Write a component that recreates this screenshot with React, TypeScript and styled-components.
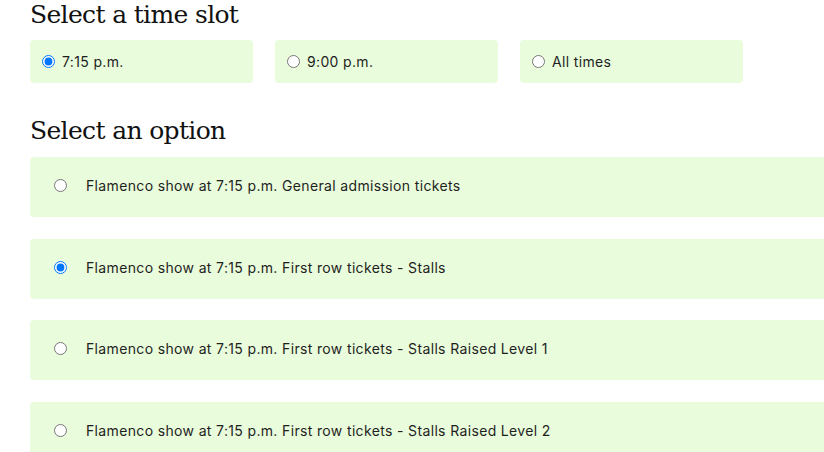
import { useState } from "react";
import styled, { createGlobalStyle } from "styled-components";

const GlobalStyle = createGlobalStyle`
  html, body {
    margin: 0;
    padding: 0;
    background: #ffffff;
    overflow: hidden;
  }
  body {
    font-family: Inter, "Noto Sans", sans-serif;
    color: #1f1f1f;
  }
`;

const timeSlots = ["7:15 p.m.", "9:00 p.m.", "All times"];

const options = [
  "Flamenco show at 7:15 p.m. General admission tickets",
  "Flamenco show at 7:15 p.m. First row tickets - Stalls",
  "Flamenco show at 7:15 p.m. First row tickets - Stalls Raised Level 1",
  "Flamenco show at 7:15 p.m. First row tickets - Stalls Raised Level 2",
];

const App = (): JSX.Element => {
  const [slot, setSlot] = useState(0);
  const [option, setOption] = useState(1);

  return (
    <Page>
      <GlobalStyle />
      <Heading>Select a time slot</Heading>
      <SlotRow>
        {timeSlots.map((label, i) => (
          <SlotCard key={label}>
            <Radio
              type="radio"
              name="slot"
              checked={slot === i}
              onChange={() => setSlot(i)}
            />
            <span>{label}</span>
          </SlotCard>
        ))}
      </SlotRow>

      <Heading $spaced>Select an option</Heading>
      <OptionList>
        {options.map((label, i) => (
          <OptionCard key={label}>
            <Radio
              type="radio"
              name="option"
              checked={option === i}
              onChange={() => setOption(i)}
            />
            <span>{label}</span>
          </OptionCard>
        ))}
      </OptionList>
    </Page>
  );
};
export default App;

const Page = styled.div`
  display: flex;
  flex-direction: column;
  padding-left: 30px;
  width: 794px;
`;

const Heading = styled.h2<{ $spaced?: boolean }>`
  margin: ${(p) => (p.$spaced ? "33px 0 11px" : "0 0 10px")};
  font-family: "DejaVu Serif", "Liberation Serif", serif;
  font-size: 25px;
  letter-spacing: -0.65px;
  line-height: 30px;
  font-weight: 400;
  color: #111;
`;

const SlotRow = styled.div`
  display: flex;
  gap: 22px;
`;

const SlotCard = styled.label`
  width: 223px;
  height: 43px;
  box-sizing: border-box;
  display: flex;
  align-items: center;
  gap: 7px;
  padding-left: 12px;
  background: #e9fcdb;
  border-radius: 4px;
  font-size: 14px;
  letter-spacing: 0.35px;
  cursor: pointer;
`;

const OptionList = styled.div`
  display: flex;
  flex-direction: column;
  gap: 21.5px;
`;

const OptionCard = styled.label`
  height: 60px;
  box-sizing: border-box;
  display: flex;
  align-items: center;
  gap: 19px;
  padding: 0 0 3px 24px;
  background: #e9fcdb;
  border-radius: 4px 0 0 4px;
  font-size: 14px;
  letter-spacing: 0.35px;
  cursor: pointer;
`;

const Radio = styled.input`
  margin: 0;
  width: 13px;
  height: 13px;
  flex-shrink: 0;
`;
